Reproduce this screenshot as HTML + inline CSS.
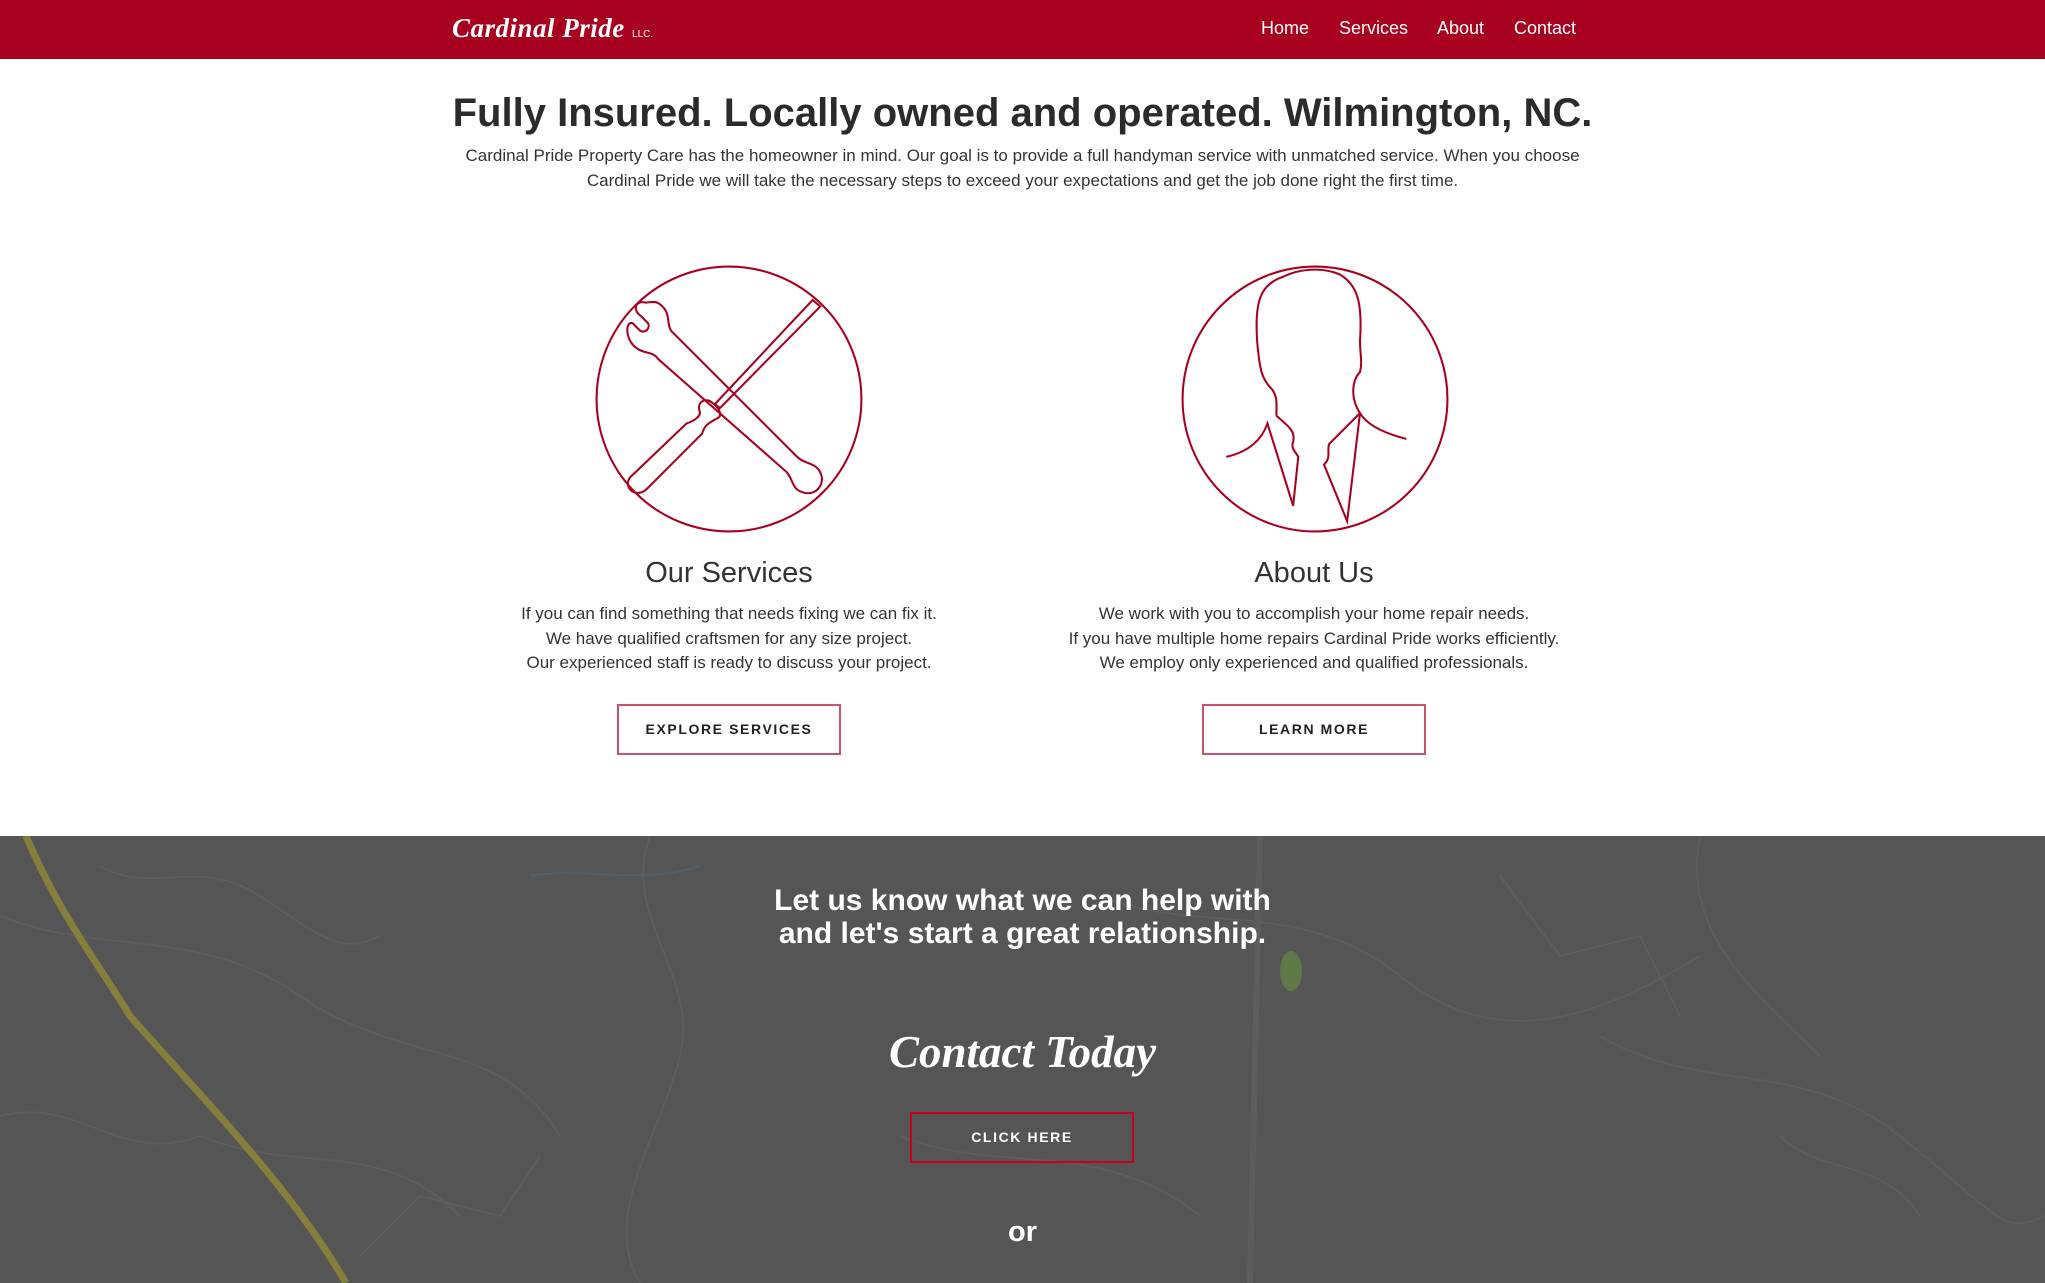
<!DOCTYPE html>
<html><head><meta charset="utf-8"><style>
*{margin:0;padding:0;box-sizing:border-box}
body{width:2045px;height:1283px;overflow:hidden;background:#fff;font-family:"Liberation Sans",Arial,sans-serif;color:#333;position:relative}
.nav{position:absolute;left:0;top:0;width:2045px;height:59px;background:#a8001f}
.logo{position:absolute;left:452px;top:13px;color:#fff;font-family:"Liberation Serif",serif;font-style:italic;font-weight:bold;font-size:27px;letter-spacing:0.5px}
.logo small{font-size:10px;font-style:normal;font-weight:normal;font-family:"Liberation Sans",sans-serif;letter-spacing:0}
.nav a{position:absolute;top:18px;color:#fff;font-size:18px;text-decoration:none}
.c{position:absolute;left:0;width:2045px;text-align:center}
h1{font-size:40px;font-weight:bold;color:#2b2b2b}
.p{font-size:17px;line-height:25px;color:#333}
.col{position:absolute;width:600px;text-align:center}
.col h2{font-size:29px;font-weight:normal;color:#333}
.col p{font-size:17px;line-height:24.5px;margin-top:12px}
.btn{position:absolute;height:51px;border:2px solid #c4536b;font-size:14px;font-weight:bold;letter-spacing:1.6px;color:#222;text-align:center;line-height:47px}
.dark{position:absolute;left:0;top:836px;width:2045px;height:447px;background:#555;overflow:hidden}
.w{color:#fff}
</style></head><body>
<div class="nav">
<div class="logo">Cardinal Pride <small>LLC.</small></div>
<a style="left:1261px">Home</a><a style="left:1339px">Services</a><a style="left:1437px">About</a><a style="left:1514px">Contact</a>
</div>
<div class="c" style="top:91px"><h1>Fully Insured. Locally owned and operated. Wilmington, NC.</h1></div>
<div class="c p" style="top:143px">Cardinal Pride Property Care has the homeowner in mind. Our goal is to provide a full handyman service with unmatched service. When you choose<br>Cardinal Pride we will take the necessary steps to exceed your expectations and get the job done right the first time.</div>

<svg style="position:absolute;left:594px;top:264px" width="270" height="270" viewBox="0 0 210 210" fill="none" stroke="#a8001f" stroke-width="1.6">
<circle cx="105" cy="105" r="103"/>
<path d="M40 30C32 28 30 36 36 40L42 46C44 50 40 54 36 52L30 46C24 44 24 60 34 66C40 70 46 68 50 74L150 162C156 170 154 176 164 178C174 180 180 170 176 162C172 154 164 156 158 150L60 52C56 46 60 38 52 32C48 28 44 30 40 30Z"/>
<path d="M170 28L176 33L98 112L94 109Z"/>
<path d="M92 108C88 104 80 106 82 114C84 118 78 122 72 124L28 166C24 172 28 178 34 178C38 178 40 176 42 174L84 132C86 126 88 124 96 120C100 118 98 112 92 108Z"/>
</svg>
<svg style="position:absolute;left:1180px;top:264px" width="270" height="270" viewBox="0 0 210 210" fill="none" stroke="#a8001f" stroke-width="1.6">
<circle cx="105" cy="105" r="103"/>
<path d="M75 118C75 110 76 104 72 98C64 90 62 84 60 60C58 30 62 16 80 10C92 4 110 2 124 8C138 16 142 30 140 60C140 70 142 76 140 84C134 90 132 104 140 116"/>
<path d="M36 150C54 146 64 136 68 124L88 188L92 150C90 146 86 144 88 138C90 130 84 126 75 118"/>
<path d="M140 116L116 140C114 146 118 150 112 156L130 200L140 116C146 126 160 132 176 136"/>
</svg>

<div class="col" style="left:429px;top:557px"><h2>Our Services</h2><p>If you can find something that needs fixing we can fix it.<br>We have qualified craftsmen for any size project.<br>Our experienced staff is ready to discuss your project.</p></div>
<div class="col" style="left:1014px;top:557px"><h2>About Us</h2><p>We work with you to accomplish your home repair needs.<br>If you have multiple home repairs Cardinal Pride works efficiently.<br>We employ only experienced and qualified professionals.</p></div>
<div class="btn" style="left:617px;top:704px;width:224px">EXPLORE SERVICES</div>
<div class="btn" style="left:1202px;top:704px;width:224px">LEARN MORE</div>

<div class="dark">
<svg width="2045" height="447" style="position:absolute;left:0;top:0" fill="none" stroke="#5d5d5d" stroke-width="2">
<path d="M0 80C100 120 200 90 300 160S500 200 560 300"/>
<path d="M650 0C620 80 700 140 680 220S600 380 640 447"/>
<path d="M1100 60C1200 100 1300 60 1400 140S1600 180 1700 120"/>
<path d="M1260 0L1250 447" stroke-width="6"/>
<path d="M1600 200C1700 260 1800 220 1900 300S2000 400 2045 380"/>
<path d="M200 300C300 340 380 300 460 380"/>
<path d="M0 280C80 260 120 330 200 300"/>
<path d="M1700 0C1680 100 1760 160 1820 220"/>
<path d="M900 300C1000 340 1100 300 1200 380"/>
<path d="M100 30C150 60 200 20 260 60S340 120 380 100"/>
<path d="M1500 40L1560 120L1640 100L1680 180"/>
<path d="M360 420L420 360L500 380L540 320"/>
<path d="M1780 300C1820 340 1880 320 1920 380"/>
<path d="M530 40C580 30 640 50 700 30" stroke="#4f5f6c"/>
<path d="M26 0C60 80 100 130 130 180C200 260 290 350 346 447" stroke="#857f3c" stroke-width="7"/>
<ellipse cx="1291" cy="135" rx="11" ry="20" fill="#5f7a48" stroke="none"/>
</svg>
<div class="c w" style="top:48px;font-size:30px;font-weight:bold;line-height:33px">Let us know what we can help with<br>and let's start a great relationship.</div>
<div class="c w" style="top:190px;font-family:'Liberation Serif',serif;font-style:italic;font-weight:bold;font-size:45px">Contact Today</div>
<div class="btn" style="left:910px;top:276px;width:224px;border-color:#c8001f;color:#fff">CLICK HERE</div>
<div class="c w" style="top:380px;font-size:29px;font-weight:bold">or</div>
</div>
</body></html>
